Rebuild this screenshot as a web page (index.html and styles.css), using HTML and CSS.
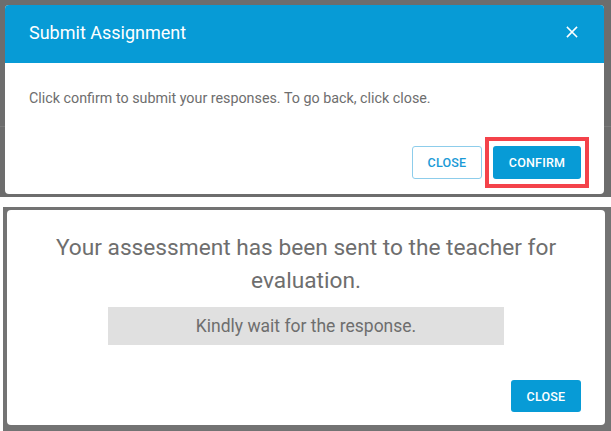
FILE: index.html
```html
<!DOCTYPE html>
<html>
<head>
<meta charset="utf-8">
<link rel="stylesheet" href="styles.css">
</head>
<body>
<section class="shot shot-top">
  <div class="backdrop-line"></div>
  <div class="dialog">
    <header class="dialog-header">
      <h2 class="dialog-title">Submit Assignment</h2>
      <button class="icon-close" aria-label="Close">
        <svg width="12" height="12" viewBox="0 0 12 12"><path d="M1.5 1.5 L10.5 10.5 M10.5 1.5 L1.5 10.5" stroke="#fff" stroke-width="1.6" stroke-linecap="square"/></svg>
      </button>
    </header>
    <div class="dialog-body">
      <p class="dialog-text">Click confirm to submit your responses. To go back, click close.</p>
    </div>
    <footer class="dialog-footer">
      <button class="btn btn-outline">Close</button>
      <span class="highlight"><button class="btn btn-primary">Confirm</button></span>
    </footer>
  </div>
</section>
<section class="shot shot-bottom">
  <div class="panel">
    <p class="panel-headline">Your assessment has been sent to the teacher for evaluation.</p>
    <div class="panel-note">Kindly wait for the response.</div>
    <div class="panel-footer">
      <button class="btn btn-primary btn-close">Close</button>
    </div>
  </div>
</section>
</body>
</html>
```

FILE: styles.css
```css
* { box-sizing: border-box; }
html, body { margin: 0; padding: 0; }
body {
  width: 611px;
  height: 431px;
  background: #ffffff;
  font-family: Roboto, "Liberation Sans", sans-serif;
  overflow: hidden;
}
.shot-top {
  position: relative;
  height: 197px;
  background: #6d6d6d;
  padding: 5px 7px 0 5px;
}
.backdrop-line {
  position: absolute;
  left: 0; right: 0; top: 126px;
  height: 1px;
  background: #7a7a7a;
}
.dialog {
  position: relative;
  height: 189px;
  background: #fff;
  border-radius: 4px;
  display: flex;
  flex-direction: column;
}
.dialog-header {
  height: 58px;
  background: #079bd6;
  border-radius: 4px 4px 0 0;
  display: flex;
  align-items: center;
  justify-content: space-between;
  padding: 0 26px 4px 24px;
}
.dialog-title {
  margin: 0;
  font-size: 18px;
  font-weight: 400;
  color: #fff;
}
.icon-close {
  background: none;
  border: 0;
  padding: 0;
  width: 12px;
  height: 12px;
  display: flex;
}
.dialog-body {
  padding: 27px 24px 0;
  flex: 1;
}
.dialog-text {
  margin: 0;
  font-size: 14.3px;
  color: #6e6e6e;
}
.dialog-footer {
  display: flex;
  justify-content: flex-end;
  gap: 11px;
  padding: 0 23px 15px;
}
.btn {
  height: 33px;
  font-family: Roboto, "Liberation Sans", sans-serif;
  font-size: 12.5px;
  font-weight: 500;
  text-transform: uppercase;
  letter-spacing: 0.2px;
  border-radius: 3px;
  padding: 0;
  cursor: pointer;
}
.btn-outline {
  width: 70px;
  background: #fff;
  color: #1a9ad6;
  border: 1px solid #8dcdeb;
}
.btn-primary {
  width: 88px;
  background: #079bd6;
  color: #fff;
  border: 0;
}
.highlight {
  display: flex;
  margin: -9px -8px -9px -8px;
  padding: 5px 4px 4px 4px;
  border: 4px solid #f4424a;
}
.shot-bottom {
  margin-top: 10px;
  margin-left: 3px;
  height: 224px;
  background: #737373;
  padding: 3px 6px 6px 4px;
}
.panel {
  height: 215px;
  background: #fff;
  border-radius: 4px;
  display: flex;
  flex-direction: column;
  align-items: center;
  padding-top: 21px;
}
.panel-headline {
  margin: 0;
  width: 560px;
  text-align: center;
  font-size: 22.7px;
  line-height: 33px;
  color: #6e6e6e;
}
.panel-note {
  margin-top: 10px;
  width: 396px;
  height: 38px;
  background: #e0e0e0;
  display: flex;
  align-items: center;
  justify-content: center;
  font-size: 17.5px;
  color: #6e6e6e;
}
.panel-footer {
  align-self: stretch;
  display: flex;
  justify-content: flex-end;
  padding: 35px 24px 0;
}
.btn-close {
  width: 70px;
  height: 32px;
}
```
